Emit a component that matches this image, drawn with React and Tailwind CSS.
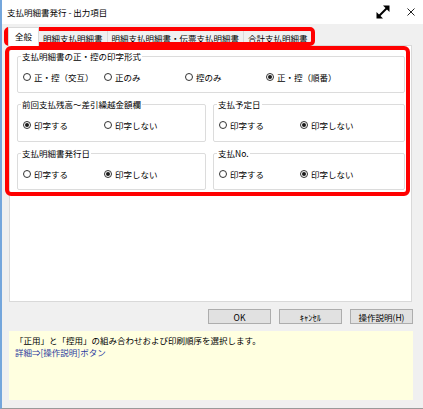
import React from "react";

const groupRows = [
  {
    cols: "grid-cols-1",
    groups: [
      {
        title: "支払明細書の正・控の印字形式",
        options: ["正・控（交互）", "正のみ", "控のみ", "正・控（順番）"],
        selected: 3,
        h: "h-[31px]",
      },
    ],
  },
  {
    cols: "grid-cols-[189px_1fr]",
    groups: [
      { title: "前回支払残高～差引繰越金額欄", options: ["印字する", "印字しない"], selected: 0, h: "h-[32px]" },
      { title: "支払予定日", options: ["印字する", "印字しない"], selected: 1, h: "h-[32px]" },
    ],
  },
  {
    cols: "grid-cols-[189px_1fr]",
    groups: [
      { title: "支払明細書発行日", options: ["印字する", "印字しない"], selected: 1, h: "h-[31px]" },
      { title: "支払No.", options: ["印字する", "印字しない"], selected: 1, h: "h-[31px]" },
    ],
  },
];

const tabs = ["全般", "明細支払明細書", "明細支払明細書・伝票支払明細書", "合計支払明細書"];

function Radio({ label, checked }) {
  return (
    <label className="flex w-[81px] shrink-0 items-center gap-[3px]">
      <span className="flex h-[8px] w-[8px] items-center justify-center rounded-full border border-[#333333] bg-white">
        {checked && <span className="h-[4px] w-[4px] rounded-full bg-[#1a1a1a]" />}
      </span>
      <span className="whitespace-nowrap">{label}</span>
    </label>
  );
}

function Group({ title, options, selected, h }) {
  return (
    <fieldset className="min-w-0 rounded-[2px] border border-[#dcdcdc] p-0">
      <legend className="ml-[3px] px-[1px] leading-[10px]">{title}</legend>
      <div className={`flex items-center pl-[5px] ${h}`}>
        {options.map((o, i) => (
          <Radio key={o} label={o} checked={i === selected} />
        ))}
      </div>
    </fieldset>
  );
}

function ExpandIcon() {
  return (
    <svg width="16" height="16" viewBox="0 0 16 16">
      <line x1="4" y1="12" x2="12" y2="4" stroke="#000" strokeWidth="2" />
      <polygon points="8,1.5 14.5,1.5 14.5,8" fill="#000" />
      <polygon points="1.5,8 1.5,14.5 8,14.5" fill="#000" />
    </svg>
  );
}

function CloseIcon() {
  return (
    <svg width="8" height="8" viewBox="0 0 8 8">
      <path d="M0.5 0.5 L7.5 7.5 M7.5 0.5 L0.5 7.5" stroke="#222" strokeWidth="1" />
    </svg>
  );
}

export default function App() {
  return (
    <div className="relative flex h-[409px] w-[423px] flex-col border-b border-l-2 border-b-[#9a9a9a] border-l-[#74a6dc] bg-[#f0f0f0] font-['Noto_Sans_CJK_JP',sans-serif] text-[8.5px] leading-[10px] text-black">
      {/* title bar */}
      <div className="flex h-[24px] items-center justify-between bg-white pl-[5px] pr-[8px]">
        <span className="text-[8.5px]">支払明細書発行 - 出力項目</span>
        <div className="flex items-center gap-[16px]">
          <ExpandIcon />
          <CloseIcon />
        </div>
      </div>

      <div className="flex flex-col pl-[7px] pr-[10px]">
        {/* tab strip */}
        <div className="mt-[3px] flex h-[18px] items-end -ml-[1px]">
          {tabs.map((t, i) =>
            i === 0 ? (
              <div
                key={t}
                className="relative z-10 -mb-[1px] flex h-[19px] items-center border border-b-0 border-[#d9d9d9] bg-white px-[6px] pb-[2px]"
              >
                {t}
              </div>
            ) : (
              <div
                key={t}
                className="-ml-[1px] flex h-[16px] items-center border border-b-0 border-[#d9d9d9] bg-[#f0f0f0] px-[4px]"
              >
                {t}
              </div>
            )
          )}
        </div>

        {/* tab page */}
        <div className="mr-[1px] flex h-[257px] flex-col gap-[6px] border border-[#d9d9d9] bg-white pl-[7px] pr-[6px] pt-[5px]">
          {groupRows.map((row, ri) => (
            <div key={ri} className={`grid gap-x-[7px] ${row.cols}`}>
              {row.groups.map((g) => (
                <Group key={g.title} {...g} />
              ))}
            </div>
          ))}
        </div>

        {/* buttons */}
        <div className="mt-[7px] flex h-[15px] justify-end gap-[8px]">
          {["OK", "ｷｬﾝｾﾙ", "操作説明(H)"].map((b) => (
            <button
              key={b}
              className="flex h-[15px] w-[63px] items-center justify-center border border-[#adadad] bg-[#e1e1e1] text-[8.5px] leading-[10px]"
            >
              {b}
            </button>
          ))}
        </div>

        {/* description */}
        <div className="mt-[7px] h-[69px] bg-[#ffffe0] pl-[6px] pt-[3px] leading-[12px]">
          <p>「正用」と「控用」の組み合わせおよび印刷順序を選択します。</p>
          <p className="text-[#2b3a9e]">詳細⇒[操作説明]ボタン</p>
        </div>
      </div>

      {/* highlight frames */}
      <div className="pointer-events-none absolute left-[2px] top-[27px] h-[19px] w-[311px] rounded-[5px] border-4 border-[#ff0000]" />
      <div className="pointer-events-none absolute left-[3px] top-[46px] h-[150px] w-[405px] rounded-[6px] border-4 border-[#ff0000]" />
    </div>
  );
}
